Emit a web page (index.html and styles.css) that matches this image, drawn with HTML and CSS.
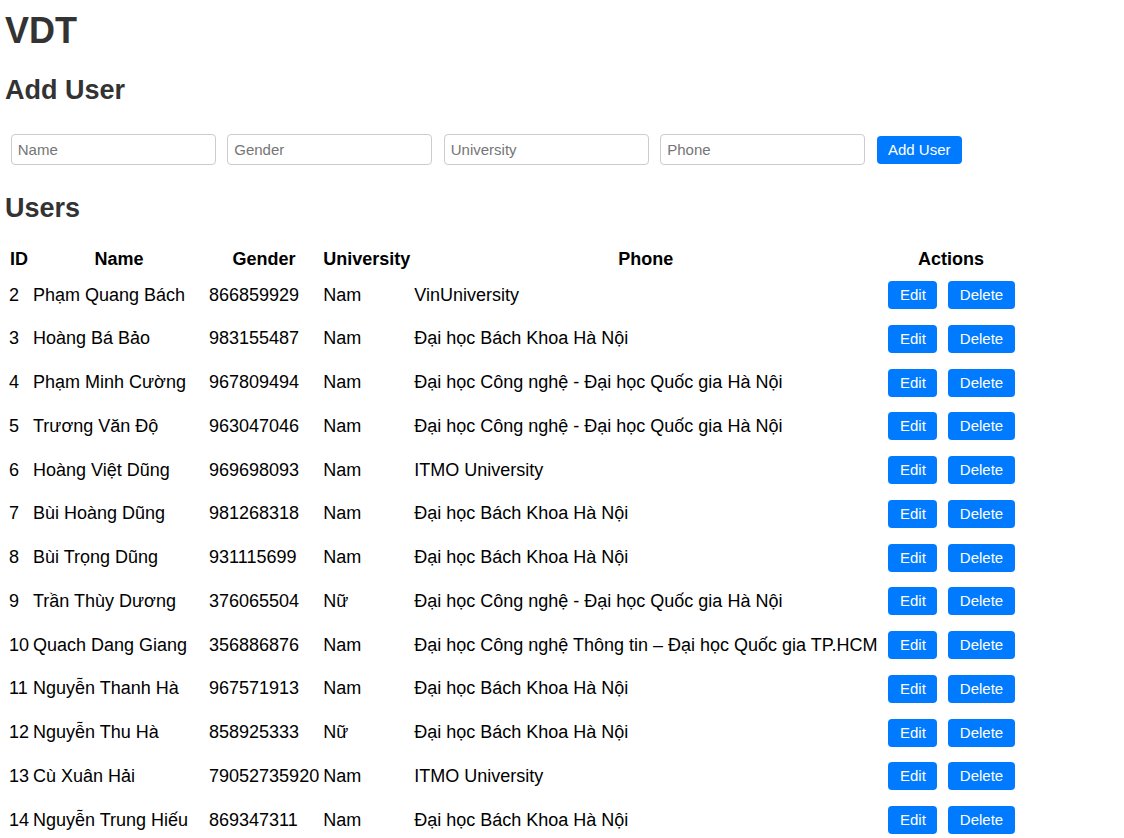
FILE: index.html
```html
<!DOCTYPE html>
<html lang="vi">
<head>
<meta charset="utf-8">
<title>VDT</title>
<link rel="stylesheet" href="styles.css">
</head>
<body>
<div class="page">
  <h1 class="title">VDT</h1>
  <h2 class="section">Add User</h2>
  <form class="add-form">
    <input class="field" type="text" placeholder="Name">
    <input class="field" type="text" placeholder="Gender">
    <input class="field" type="text" placeholder="University">
    <input class="field" type="text" placeholder="Phone">
    <button class="btn btn-add" type="button">Add User</button>
  </form>
  <h2 class="section">Users</h2>
  <table class="users">
    <thead>
      <tr>
        <th>ID</th>
        <th class="col-name">Name</th>
        <th>Gender</th>
        <th>University</th>
        <th>Phone</th>
        <th>Actions</th>
      </tr>
    </thead>
    <tbody>
      <tr><td>2</td><td>Phạm Quang Bách</td><td>866859929</td><td>Nam</td><td>VinUniversity</td><td><div class="actions"><button class="btn btn-edit">Edit</button><button class="btn btn-del">Delete</button></div></td></tr>
      <tr><td>3</td><td>Hoàng Bá Bảo</td><td>983155487</td><td>Nam</td><td>Đại học Bách Khoa Hà Nội</td><td><div class="actions"><button class="btn btn-edit">Edit</button><button class="btn btn-del">Delete</button></div></td></tr>
      <tr><td>4</td><td>Phạm Minh Cường</td><td>967809494</td><td>Nam</td><td>Đại học Công nghệ - Đại học Quốc gia Hà Nội</td><td><div class="actions"><button class="btn btn-edit">Edit</button><button class="btn btn-del">Delete</button></div></td></tr>
      <tr><td>5</td><td>Trương Văn Độ</td><td>963047046</td><td>Nam</td><td>Đại học Công nghệ - Đại học Quốc gia Hà Nội</td><td><div class="actions"><button class="btn btn-edit">Edit</button><button class="btn btn-del">Delete</button></div></td></tr>
      <tr><td>6</td><td>Hoàng Việt Dũng</td><td>969698093</td><td>Nam</td><td>ITMO University</td><td><div class="actions"><button class="btn btn-edit">Edit</button><button class="btn btn-del">Delete</button></div></td></tr>
      <tr><td>7</td><td>Bùi Hoàng Dũng</td><td>981268318</td><td>Nam</td><td>Đại học Bách Khoa Hà Nội</td><td><div class="actions"><button class="btn btn-edit">Edit</button><button class="btn btn-del">Delete</button></div></td></tr>
      <tr><td>8</td><td>Bùi Trọng Dũng</td><td>931115699</td><td>Nam</td><td>Đại học Bách Khoa Hà Nội</td><td><div class="actions"><button class="btn btn-edit">Edit</button><button class="btn btn-del">Delete</button></div></td></tr>
      <tr><td>9</td><td>Trần Thùy Dương</td><td>376065504</td><td>Nữ</td><td>Đại học Công nghệ - Đại học Quốc gia Hà Nội</td><td><div class="actions"><button class="btn btn-edit">Edit</button><button class="btn btn-del">Delete</button></div></td></tr>
      <tr><td>10</td><td>Quach Dang Giang</td><td>356886876</td><td>Nam</td><td>Đại học Công nghệ Thông tin – Đại học Quốc gia TP.HCM</td><td><div class="actions"><button class="btn btn-edit">Edit</button><button class="btn btn-del">Delete</button></div></td></tr>
      <tr><td>11</td><td>Nguyễn Thanh Hà</td><td>967571913</td><td>Nam</td><td>Đại học Bách Khoa Hà Nội</td><td><div class="actions"><button class="btn btn-edit">Edit</button><button class="btn btn-del">Delete</button></div></td></tr>
      <tr><td>12</td><td>Nguyễn Thu Hà</td><td>858925333</td><td>Nữ</td><td>Đại học Bách Khoa Hà Nội</td><td><div class="actions"><button class="btn btn-edit">Edit</button><button class="btn btn-del">Delete</button></div></td></tr>
      <tr><td>13</td><td>Cù Xuân Hải</td><td>79052735920</td><td>Nam</td><td>ITMO University</td><td><div class="actions"><button class="btn btn-edit">Edit</button><button class="btn btn-del">Delete</button></div></td></tr>
      <tr><td>14</td><td>Nguyễn Trung Hiếu</td><td>869347311</td><td>Nam</td><td>Đại học Bách Khoa Hà Nội</td><td><div class="actions"><button class="btn btn-edit">Edit</button><button class="btn btn-del">Delete</button></div></td></tr>
    </tbody>
  </table>
</div>
</body>
</html>
```

FILE: styles.css
```css
html, body {
  margin: 0;
  padding: 0;
  background: #ffffff;
}

body {
  font-family: "Liberation Sans", Arial, sans-serif;
  font-size: 18px;
  color: #000;
}

.page {
  padding: 10px 5px 0;
}

.title {
  font-size: 36px;
  font-weight: bold;
  color: #333;
  margin: 0 0 23px;
  line-height: normal;
}

.section {
  font-size: 27px;
  font-weight: bold;
  color: #333;
  margin: 22.4px 0;
  line-height: normal;
}

.add-form {
  display: flex;
  align-items: center;
  gap: 11.5px;
  padding: 6px 5.75px 5px;
}

.field {
  box-sizing: border-box;
  width: 205px;
  height: 31px;
  margin: 0;
  padding: 0 6px;
  border: 1px solid #ccc;
  border-radius: 4px;
  font-family: "Liberation Sans", Arial, sans-serif;
  font-size: 15px;
  color: #333;
  background: #fff;
}

.field::placeholder {
  color: #757575;
}

.btn {
  box-sizing: border-box;
  height: 28px;
  margin: 0;
  border: none;
  border-radius: 4px;
  background: #007bff;
  color: #fff;
  font-family: "Liberation Sans", Arial, sans-serif;
  font-size: 15px;
  line-height: 28px;
  cursor: pointer;
}

.btn-add {
  padding: 0 11.25px;
}

.btn-edit,
.btn-del {
  padding: 0 11.5px;
}

.users {
  margin-left: 1px;
  border-spacing: 2px;
  font-size: 18px;
}

.users th {
  padding: 1px 1px 2px;
  font-weight: bold;
  text-align: center;
}

.users td {
  padding: 1px;
  text-align: left;
  vertical-align: middle;
  white-space: nowrap;
}

.users th.col-name {
  width: 172px;
}

.actions {
  display: flex;
  align-items: center;
  gap: 11px;
  padding: 5.875px 6px 5.875px 7px;
}
```
